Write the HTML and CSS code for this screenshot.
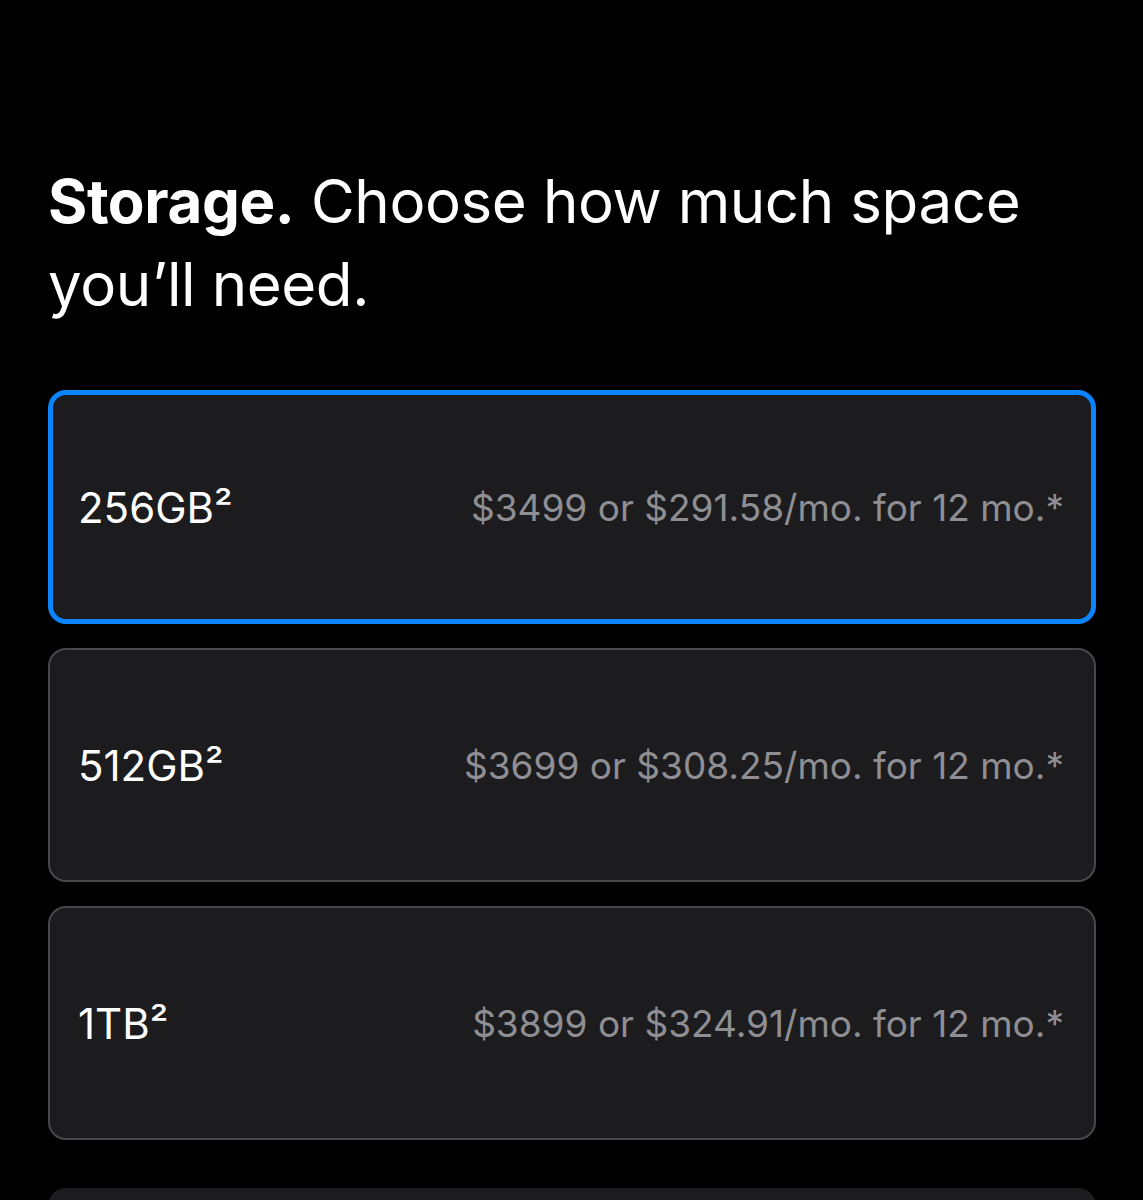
FILE: index.html
```html
<!DOCTYPE html>
<html lang="en">

<head>
    <meta charset="UTF-8">
    <meta name="viewport" content="width=device-width, initial-scale=1.0">
    <title>Storage</title>
    <link rel="stylesheet" href="styles.css">
</head>

<body>
    <div class="storage">
        <h2 class="storage-title"><strong>Storage.</strong> Choose how much space you’ll need.</h2>

        <div class="options">
            <label class="option selected">
                <span class="option-size">256GB²</span>
                <span class="option-price">$3499 or $291.58/mo. for 12 mo.*</span>
            </label>
            <label class="option">
                <span class="option-size">512GB²</span>
                <span class="option-price">$3699 or $308.25/mo. for 12 mo.*</span>
            </label>
            <label class="option">
                <span class="option-size">1TB²</span>
                <span class="option-price">$3899 or $324.91/mo. for 12 mo.*</span>
            </label>
            <label class="option faded">
                <span class="option-size">2TB²</span>
                <span class="option-price">$4299 or $358.25/mo. for 12 mo.*</span>
            </label>
        </div>
    </div>
</body>

</html>
```

FILE: styles.css
```css
body {
    margin: 0;
    background: #000;
    color: #f5f5f7;
    font-family: Inter, "Liberation Sans", Arial, sans-serif;
    height: 1200px;
    overflow: hidden;
}

.storage {
    padding: 160px 47px 0 48px;
}

.storage-title {
    margin: 0 0 64px;
    font-size: 60px;
    font-weight: 400;
    line-height: 83px;
    letter-spacing: -0.4px;
    color: #fff;
}

.storage-title strong {
    font-weight: 700;
}

.options {
    display: flex;
    flex-direction: column;
    gap: 24px;
}

.option {
    display: flex;
    align-items: center;
    justify-content: space-between;
    height: 234px;
    box-sizing: border-box;
    padding: 0 30px 0 28px;
    background: #1c1c1e;
    border: 2px solid #48484a;
    border-radius: 18px;
}

.option.selected {
    border: 5px solid #0a84ff;
    padding: 0 27px 0 25px;
}

.option.faded {
    margin-top: 24px;
    border-color: #1c1c1e;
}

.option-size {
    font-size: 42px;
    color: #fff;
}

.option-price {
    font-size: 37px;
    color: #8e8e93;
}
```
